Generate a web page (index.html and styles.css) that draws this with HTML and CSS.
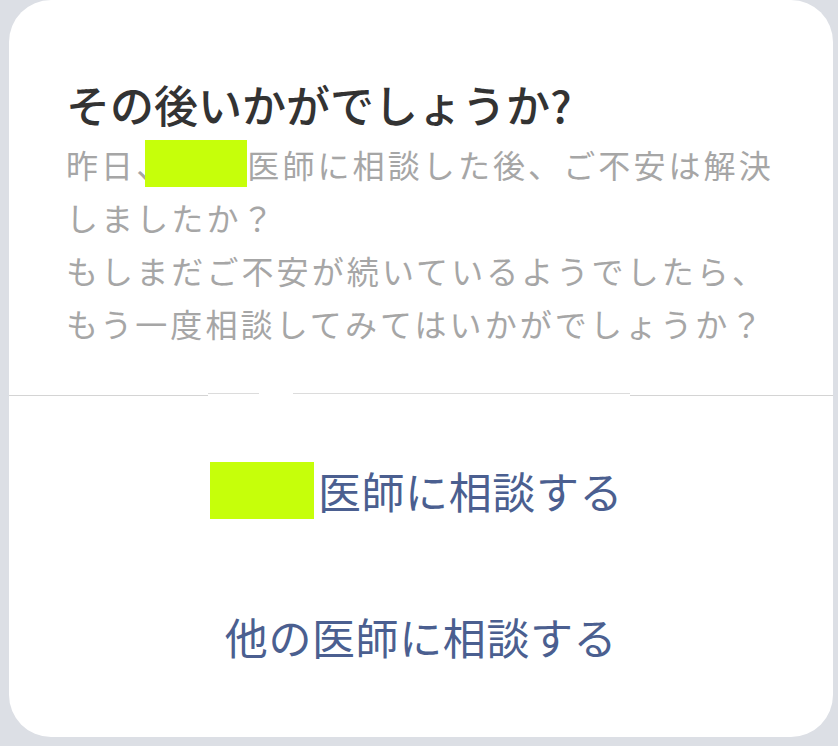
FILE: index.html
```html
<!DOCTYPE html>
<html lang="ja">
<head>
<meta charset="utf-8">
<title>その後いかがでしょうか?</title>
<link rel="stylesheet" href="styles.css">
</head>
<body>
<div class="dialog">
  <div class="content">
    <h1 class="title">その後いかがでしょうか?</h1>
    <p class="message">昨日、<span class="mask mask-inline"></span>医師に相談した後、ご不安は解決<br>しましたか？<br>もしまだご不安が続いているようでしたら、<br>もう一度相談してみてはいかがでしょうか？</p>
  </div>
  <div class="divider">
    <span class="seg seg-a"></span>
    <span class="seg seg-b raised"></span>
    <span class="seg seg-gap"></span>
    <span class="seg seg-c raised"></span>
    <span class="seg seg-d"></span>
  </div>
  <div class="actions">
    <div class="action"><span class="mask mask-button"></span>医師に相談する</div>
    <div class="action">他の医師に相談する</div>
  </div>
</div>
</body>
</html>
```

FILE: styles.css
```css
html, body {
  margin: 0;
  padding: 0;
}

body {
  background: #dcdfe5;
  width: 838px;
  height: 746px;
  overflow: hidden;
  font-family: "Noto Sans CJK JP", "Noto Sans", sans-serif;
}

.dialog {
  margin-left: 9px;
  width: 824px;
  height: 737px;
  background: #ffffff;
  border-radius: 42px;
  display: flex;
  flex-direction: column;
  overflow: hidden;
}

.content {
  flex: none;
  padding: 76px 40px 0 57px;
  height: 393px;
  box-sizing: border-box;
}

.title {
  margin: 0;
  font-size: 44px;
  line-height: 56px;
  font-weight: 500;
  color: #333333;
  letter-spacing: 0;
}

.message {
  margin: 6px 0 0 0;
  font-size: 32px;
  line-height: 53px;
  letter-spacing: 3.1px;
  color: #a6a6a6;
  white-space: nowrap;
}

.mask {
  display: inline-block;
  background: #c6ff0a;
}

.mask-inline {
  width: 102px;
  height: 47px;
  margin-left: -26px;
  margin-right: 0;
  vertical-align: -9px;
}

.mask-button {
  width: 104px;
  height: 57px;
  margin-left: -9px;
  margin-right: 4px;
  vertical-align: -12px;
}

.divider {
  flex: none;
  display: flex;
  height: 3px;
}

.seg {
  display: block;
  height: 1px;
}

.seg-a { width: 199px; margin-top: 2px; background: #d4d4d4; }
.seg-b { width: 51px; background: #dcdcdc; }
.seg-gap { width: 34px; }
.seg-c { width: 337px; background: #dcdcdc; }
.seg-d { flex: 1; margin-top: 2px; background: #d4d4d4; }

.actions {
  padding-top: 21px;
  display: flex;
  flex-direction: column;
}

.action {
  height: 146px;
  display: flex;
  align-items: center;
  justify-content: center;
  font-size: 43px;
  color: #4b5f90;
  letter-spacing: 0.6px;
}
```
